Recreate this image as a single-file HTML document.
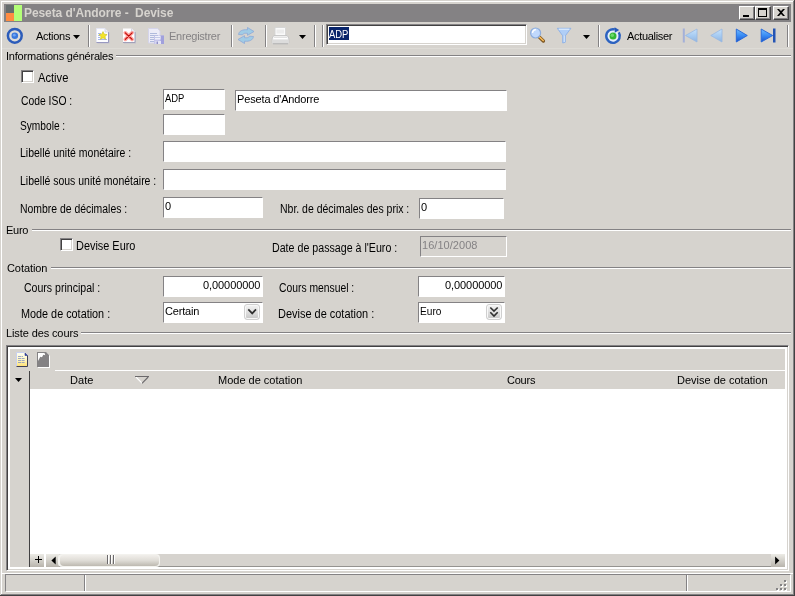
<!DOCTYPE html>
<html><head><meta charset="utf-8"><title>Peseta d'Andorre - Devise</title>
<style>
html,body{margin:0;padding:0}
body{width:795px;height:596px;overflow:hidden;background:#d6d3ce;position:relative;font-family:"Liberation Sans",sans-serif;font-size:11px}
.a{position:absolute}
.t{position:absolute;white-space:pre;line-height:13px;height:13px}
.b{position:absolute;box-sizing:border-box}
.in{position:absolute;box-sizing:border-box;background:#fff;border:1px solid;border-color:#848284 #fff #fff #848284}
.hl{position:absolute;height:1px;background:#848284;box-shadow:0 1px 0 #fff}
.vs{position:absolute;width:1px;background:#848284;box-shadow:1px 0 0 #fff;top:25px;height:22px}
.cb{position:absolute;box-sizing:border-box;width:13px;height:13px;background:#fff;border:1px solid;border-color:#848284 #fff #fff #848284;box-shadow:inset 1px 1px 0 #424142,inset -1px -1px 0 #d6d3ce}
.wb{position:absolute;box-sizing:border-box;width:16px;height:14px;top:6px;background:#d6d3ce;border:1px solid;border-color:#fff #424142 #424142 #fff;box-shadow:inset -1px -1px 0 #848284}
</style></head><body>
<!-- window frame -->
<div class="a" style="left:1px;top:1px;width:792px;height:1px;background:#fff"></div>
<div class="a" style="left:1px;top:1px;width:1px;height:593px;background:#fff"></div>
<div class="a" style="left:793px;top:1px;width:1px;height:594px;background:#848284"></div>
<div class="a" style="left:1px;top:594px;width:793px;height:1px;background:#848284"></div>
<div class="a" style="left:794px;top:0;width:1px;height:596px;background:#424142"></div>
<div class="a" style="left:0;top:595px;width:795px;height:1px;background:#424142"></div>
<!-- title bar -->
<div class="a" style="left:4px;top:4px;width:787px;height:18px;background:#848284"></div>
<div class="a" style="left:6px;top:5px;width:8px;height:8px;background:#666d6d"></div>
<div class="a" style="left:6px;top:13px;width:8px;height:8px;background:#ff8c42"></div>
<div class="a" style="left:14px;top:5px;width:8px;height:16px;background:#b4ff78"></div>
<div class="wb" style="left:739px"><div class="a" style="left:3px;top:8px;width:6px;height:2px;background:#000"></div></div>
<div class="wb" style="left:755px"><div class="b" style="left:2px;top:1px;width:9px;height:9px;border:1px solid #000;border-top-width:2px"></div></div>
<div class="wb" style="left:773px"><svg class="a" style="left:3px;top:2px" width="8" height="7" viewBox="0 0 8 7"><path d="M0 0h2l2 2 2-2h2l-3 3.5L8 7H6L4 5 2 7H0l3-3.5z" fill="#000"/></svg></div>
<!-- toolbar -->
<svg class="a" style="left:6px;top:27px" width="18" height="18" viewBox="0 0 18 18"><circle cx="8.800" cy="8.800" r="6.900" fill="#dddcd9" stroke="#2c5cba" stroke-width="2.500"/><circle cx="8.800" cy="8.800" r="3.300" fill="#3a78dc"/><circle cx="8.300" cy="8.200" r="1.400" fill="#6ea4f4"/></svg>
<svg class="a" style="left:73px;top:35px" width="7" height="4" viewBox="0 0 7 4"><path d="M0 0h7L3.5 4z" fill="#000"/></svg>
<div class="vs" style="left:88px"></div>
<!-- new -->
<svg class="a" style="left:96px;top:28px" width="15" height="16" viewBox="0 0 15 16"><path d="M1.500 1.500h8.500l3.500 3.500v10.500h-12z" fill="#b4b4d0" opacity=".55"/><path d="M0.500 0.500h8.500l3.500 3.500v10h-12z" fill="#fdfdff"/><path d="M12.500 4v10.500h-12" stroke="#9898c0" fill="none"/><path d="M9 0.500v3.500h3.500" fill="#eceff8" stroke="#c8cce4" stroke-width=".7"/><path d="M0.500 14v-13.500h8.500" stroke="#e4e6f4" fill="none"/><path d="M2 5.500h3M2 7.500h2M2 9.500h2M2 11.500h9" stroke="#7890e0" stroke-width=".8" opacity=".8"/><path d="M7 3.600l1.250 2.600 2.850.35-2.100 1.950.55 2.800L7 9.900l-2.550 1.400.55-2.800-2.100-1.950 2.850-.35z" fill="#f4e428" stroke="#c8c020" stroke-width=".6"/></svg>
<!-- delete -->
<svg class="a" style="left:122px;top:28px" width="15" height="16" viewBox="0 0 15 16"><path d="M2 1.500h8.500l3.500 3.500v10.500h-12z" fill="#b4b4c8" opacity=".55"/><path d="M1 0.500h8.500l3.500 3.500v10h-12z" fill="#fdfdff"/><path d="M13 4v10.500h-12" stroke="#a0a0b8" fill="none"/><path d="M9.500 0.500v3.500h3.500" fill="#ececf4" stroke="#c8c8dc" stroke-width=".7"/><path d="M3.300 4.800l6.800 6.600M10.100 4.800l-6.800 6.600" stroke="#ff9088" stroke-width="3.600" stroke-linecap="round" opacity=".85"/><path d="M3.300 4.800l6.800 6.600M10.100 4.800l-6.800 6.600" stroke="#c00808" stroke-width="1.100" stroke-linecap="round"/></svg>
<!-- save (disabled) -->
<svg class="a" style="left:148px;top:28px" width="17" height="17" viewBox="0 0 17 17"><path d="M0.500 0.500h9l2.500 2.500v12h-11.500z" fill="#ececf8" stroke="#d4d4ea"/><path d="M2 5.500h7M2 7.500h8M2 9.500h6M2 11.500h8M2 13.500h8" stroke="#a8b4d8" stroke-width=".9"/><rect x="6" y="7.500" width="10" height="8.500" fill="#c4c4ea"/><rect x="12.500" y="7.500" width="3.500" height="8.500" fill="#a0a0dc"/><rect x="7" y="8" width="5.500" height="3.500" fill="#f0f0fc"/><path d="M7 9.500h5" stroke="#b8c0e0" stroke-width=".8"/><rect x="7.500" y="13" width="5.500" height="3" fill="#e4e4f6"/><rect x="8.500" y="13.500" width="1.500" height="2.500" fill="#9090c8"/></svg>
<div class="vs" style="left:231px"></div>
<!-- refresh arrows (disabled) -->
<svg class="a" style="left:237px;top:27px" width="18" height="17" viewBox="0 0 18 17"><path d="M1.500 7.500C2 4 5.500 2.300 10.500 2.800V.500l6.500 4-6.500 3.800V6.300C8 6 6.300 6.300 5.500 7.800z" fill="#a0cce6" stroke="#8ca8d8" stroke-width=".8"/><path d="M16.500 9.500C16 13 12.500 14.700 7.500 14.200v2.300L1 12.500l6.500-3.800v2C10 11 11.700 10.700 12.500 9.200z" fill="#a0cce6" stroke="#8ca8d8" stroke-width=".8"/></svg>
<div class="vs" style="left:265px"></div>
<!-- printer -->
<svg class="a" style="left:271px;top:27px" width="19" height="18" viewBox="0 0 19 18"><path d="M4 0.500h10.500v8.500h-10.500z" fill="#fafafa" stroke="#d4d4d4" stroke-width=".9"/><path d="M5.500 2.500h7.500v4h-7.500z" fill="#ececec"/><path d="M2.800 8.500h13.400l1.600 2.500v4.800c0 .6-.4 1-1 1h-14.600c-.6 0-1-.4-1-1v-4.800z" fill="#f3f3f3" stroke="#c4c4c4" stroke-width=".9"/><path d="M1.200 12.500h16.600v3.200c0 .6-.4 1-1 1h-14.600c-.6 0-1-.4-1-1z" fill="#dcdcdc"/><path d="M2 16.700h15" stroke="#b4b4b4"/><path d="M2.500 11.500h14" stroke="#fff" stroke-width="1.200"/><path d="M3 10.300h13" stroke="#d8d8d8" stroke-width=".8"/></svg>
<svg class="a" style="left:299px;top:35px" width="7" height="4" viewBox="0 0 7 4"><path d="M0 0h7L3.500 4z" fill="#000"/></svg>
<div class="vs" style="left:314px"></div>
<div class="vs" style="left:322px"></div>
<!-- search box -->
<div class="b" style="left:326px;top:24px;width:201px;height:21px;background:#fff;border:1px solid;border-color:#848284 #fff #fff #848284;box-shadow:inset 1px 1px 0 #424142,inset -1px -1px 0 #d6d3ce"></div>
<div class="a" style="left:329px;top:27px;width:20px;height:13px;background:#08246b"></div>
<!-- magnifier -->
<svg class="a" style="left:528px;top:26px" width="19" height="19" viewBox="0 0 19 19"><path d="M11.500 11.300l3.900 3.700" stroke="#7a5420" stroke-width="3.300" stroke-linecap="round"/><path d="M11.300 10.800l3.900 3.700" stroke="#f4b858" stroke-width="1.700" stroke-linecap="round"/><circle cx="7.600" cy="7" r="5" fill="#c0d8fc" stroke="#8cacdc" stroke-width="1.200"/><path d="M4.600 6.300a3.200 3.200 0 0 1 2.800-2.600" stroke="#fff" stroke-width="1.500" fill="none" stroke-linecap="round"/></svg>
<!-- funnel -->
<svg class="a" style="left:556px;top:27px" width="16" height="17" viewBox="0 0 16 17"><path d="M1.300 1.300h13.600l-5.600 7.500v6.400l-2.600.8v-7.200z" fill="#b0cef6" stroke="#8cb0e6" stroke-width=".9" stroke-linejoin="round"/><path d="M2.800 2.200h10.600" stroke="#e4f0ff" stroke-width="1.100"/><path d="M8.300 8.500v6.500" stroke="#d4e6fc" stroke-width="1"/></svg>
<svg class="a" style="left:583px;top:35px" width="7" height="4" viewBox="0 0 7 4"><path d="M0 0h7L3.500 4z" fill="#000"/></svg>
<div class="vs" style="left:598px"></div>
<!-- actualiser -->
<svg class="a" style="left:604px;top:27px" width="18" height="18" viewBox="0 0 18 18"><circle cx="9" cy="9" r="6" fill="#e4eefc"/><path d="M14.800 5.400A6.800 6.800 0 1 1 10.800 2.450" fill="none" stroke="#2c62c0" stroke-width="2.400"/><path d="M10.600.300l4.600 2.800-4.400 2.600z" fill="#2458b8"/><circle cx="9" cy="9" r="3.500" fill="#34b834"/><circle cx="8.300" cy="8.200" r="1.700" fill="#6cd86c"/></svg>
<!-- nav -->
<svg class="a" style="left:0;top:0" width="0" height="0"><defs><linearGradient id="ge" x1="0" y1="0" x2="0" y2="1"><stop offset="0" stop-color="#70bcff"/><stop offset=".5" stop-color="#3a8cf4"/><stop offset="1" stop-color="#1a54cc"/></linearGradient><linearGradient id="gd" x1="0" y1="0" x2="0" y2="1"><stop offset="0" stop-color="#c8e2fb"/><stop offset=".5" stop-color="#a8ccf2"/><stop offset="1" stop-color="#90b4e0"/></linearGradient></defs></svg>
<svg class="a" style="left:682px;top:28px" width="16" height="15" viewBox="0 0 16 15"><rect x="0.800" y="0.500" width="2" height="14" fill="#a4b0d8"/><path d="M15 1v13L3.500 7.500z" fill="url(#gd)" stroke="#98b8e2" stroke-width=".8"/></svg>
<svg class="a" style="left:710px;top:28px" width="13" height="15" viewBox="0 0 13 15"><path d="M12 1v13L0.800 7.500z" fill="url(#gd)" stroke="#98b8e2" stroke-width=".8"/></svg>
<svg class="a" style="left:735px;top:28px" width="13" height="15" viewBox="0 0 13 15"><path d="M1.300 1v13L12.300 7.500z" fill="url(#ge)" stroke="#2264d8" stroke-width=".9"/></svg>
<svg class="a" style="left:760px;top:28px" width="16" height="15" viewBox="0 0 16 15"><rect x="13" y="0.500" width="2.500" height="14" fill="#2454b4"/><path d="M1.200 1v13L12.700 7.500z" fill="url(#ge)" stroke="#2264d8" stroke-width=".9"/></svg>
<div class="vs" style="left:787px"></div>

<!-- form -->
<div class="hl" style="left:116px;top:55px;width:675px"></div>
<div class="a" style="left:2px;top:48px;width:791px;height:1px;background:#dddbd6"></div>
<div class="cb" style="left:21px;top:70px"></div>
<div class="in" style="left:163px;top:89px;width:62px;height:21px"></div>
<div class="in" style="left:235px;top:90px;width:272px;height:21px"></div>
<div class="in" style="left:163px;top:114px;width:62px;height:21px"></div>
<div class="in" style="left:163px;top:141px;width:343px;height:21px"></div>
<div class="in" style="left:163px;top:169px;width:343px;height:21px"></div>
<div class="in" style="left:163px;top:197px;width:100px;height:21px"></div>
<div class="in" style="left:419px;top:198px;width:85px;height:21px"></div>
<div class="hl" style="left:32px;top:229px;width:759px"></div>
<div class="cb" style="left:60px;top:238px"></div>
<div class="in" style="left:420px;top:236px;width:87px;height:21px;background:#d6d3ce"></div>
<div class="hl" style="left:51px;top:267px;width:740px"></div>
<div class="in" style="left:163px;top:276px;width:100px;height:21px"></div>
<div class="in" style="left:418px;top:276px;width:87px;height:21px"></div>
<div class="in" style="left:163px;top:302px;width:100px;height:21px"></div>
<div class="in" style="left:418px;top:302px;width:87px;height:21px"></div>
<div class="b" style="left:244px;top:304px;width:16px;height:16px;border:1px solid #cfcfcf;border-radius:3px;background:linear-gradient(#f2f2f2,#e2e2e2 45%,#c6c6c6);box-shadow:inset 0 0 0 1px #f8f8f8"></div>
<svg class="a" style="left:247px;top:308px" width="10" height="7" viewBox="0 0 10 7"><path d="M1.300 1.400l3.900 4 3.800-4" stroke="#303030" stroke-width="1.700" fill="none"/></svg>
<div class="b" style="left:486px;top:304px;width:16px;height:16px;border:1px solid #cfcfcf;border-radius:3px;background:linear-gradient(#f2f2f2,#e2e2e2 45%,#c6c6c6);box-shadow:inset 0 0 0 1px #f8f8f8"></div>
<svg class="a" style="left:489px;top:306px" width="10" height="12" viewBox="0 0 10 12"><path d="M1.300 1.500l3.700 3.600 3.700-3.600M1.300 6.300l3.700 3.700 3.700-3.700" stroke="#303030" stroke-width="1.600" fill="none"/></svg>
<div class="hl" style="left:81px;top:332px;width:710px"></div>

<!-- grid -->
<div class="b" style="left:6px;top:345px;width:783px;height:226px;background:#fff;border:1px solid;border-color:#848284 #fff #fff #848284;box-shadow:inset 1px 1px 0 #424142,inset -1px -1px 0 #d6d3ce"></div>
<div class="a" style="left:10px;top:349px;width:775px;height:22px;background:#d6d3ce"></div>
<div class="a" style="left:10px;top:371px;width:19px;height:196px;background:#d6d3ce"></div>
<div class="a" style="left:29px;top:371px;width:1px;height:196px;background:#424142"></div>
<div class="a" style="left:30px;top:371px;width:755px;height:18px;background:#d6d3ce"></div>
<div class="a" style="left:55px;top:370px;width:730px;height:1px;background:#fff"></div>
<!-- grid toolbar icons -->
<svg class="a" style="left:16px;top:352px" width="13" height="16" viewBox="0 0 13 16"><defs><linearGradient id="yg" x1="0" y1="0" x2="0" y2="1"><stop offset="0" stop-color="#fffff4"/><stop offset=".55" stop-color="#fff6c0"/><stop offset="1" stop-color="#ffe070"/></linearGradient></defs><path d="M0.500 0.500h8l3 3v11h-11z" fill="url(#yg)"/><path d="M0.500 0.500v14" stroke="#c8d0f0"/><path d="M0.500 0.500h8" stroke="#c8d0f0"/><path d="M11.500 3.500v11h-11" stroke="#404058" fill="none"/><path d="M9 1l2.500 2.500h-2.500z" fill="#3848a8" stroke="#283890" stroke-width=".6"/><path d="M2 4.500h5M2 6.500h7M2 8.500h7M2 10.500h7" stroke="#8090c4" stroke-width=".9" stroke-dasharray="3 .6" opacity=".85"/></svg>
<svg class="a" style="left:37px;top:352px" width="14" height="16" viewBox="0 0 14 16"><path d="M1 1h9l3 3v12h-12z" fill="#fff"/><path d="M0 0h9l3 3v12h-12z" fill="#848284"/><path d="M1 1h6.500l.8 2.200-2-.4-1.300 2.400-1.700-.5-2.300 4.300z" fill="#fff"/></svg>
<svg class="a" style="left:15px;top:378px" width="7" height="4" viewBox="0 0 7 4"><path d="M0 0h7L3.500 4z" fill="#000"/></svg>
<svg class="a" style="left:135px;top:376px" width="15" height="9" viewBox="0 0 15 9"><path d="M1 1l6.200 6.300" stroke="#fff" stroke-width="1.100"/><path d="M13.200 1l-6.200 6.300" stroke="#6b696b" stroke-width="1.100"/><path d="M0 .500h14" stroke="#6b696b"/></svg>
<!-- scrollbar -->
<div class="a" style="left:30px;top:554px;width:755px;height:13px;background:#d6d3ce"></div>
<div class="a" style="left:30px;top:566px;width:755px;height:1px;background:#959390"></div>
<div class="a" style="left:30px;top:554px;width:14px;height:13px;background:linear-gradient(#ecebe6,#b8b4ac)"></div>
<div class="a" style="left:35px;top:559px;width:7px;height:1px;background:#000"></div>
<div class="a" style="left:38px;top:556px;width:1px;height:7px;background:#000"></div>
<div class="a" style="left:44px;top:554px;width:2px;height:13px;background:#fff"></div>
<div class="a" style="left:46px;top:554px;width:13px;height:13px;background:linear-gradient(#ecebe6,#b8b4ac)"></div>
<svg class="a" style="left:51px;top:556px" width="5" height="9" viewBox="0 0 5 9"><path d="M4.700 .600v7.800L.400 4.500z" fill="#000"/></svg>
<div class="a" style="left:58px;top:554px;width:102px;height:13px;border-radius:4px;background:#f3f2ee"></div>
<div class="a" style="left:60px;top:555px;width:99px;height:11px;border-radius:4px;background:linear-gradient(#f1efeb,#dfdcd6 50%,#bdb9b0)"></div>
<div class="a" style="left:107px;top:555px;width:1px;height:9px;background:#6b696b;box-shadow:3px 0 0 #6b696b,6px 0 0 #6b696b,1px 0 0 #fff,4px 0 0 #fff,7px 0 0 #fff"></div>
<div class="a" style="left:771px;top:554px;width:14px;height:13px;background:linear-gradient(#ecebe6,#b8b4ac)"></div>
<svg class="a" style="left:775px;top:556px" width="5" height="9" viewBox="0 0 5 9"><path d="M.100 .600v7.800L4.400 4.500z" fill="#000"/></svg>

<!-- status bar -->
<div class="a" style="left:2px;top:573px;width:791px;height:1px;background:#fff"></div>
<div class="b" style="left:5px;top:574px;width:786px;height:18px;border:1px solid;border-color:#848284 #fff #fff #848284"></div>
<div class="a" style="left:84px;top:575px;width:1px;height:16px;background:#848284;box-shadow:1px 0 0 #fff"></div>
<div class="a" style="left:686px;top:575px;width:1px;height:16px;background:#848284;box-shadow:1px 0 0 #fff"></div>
<svg class="a" style="left:776px;top:580px" width="12" height="12" viewBox="0 0 12 12"><g fill="#fff"><rect x="9" y="1" width="2" height="2"/><rect x="5" y="5" width="2" height="2"/><rect x="9" y="5" width="2" height="2"/><rect x="1" y="9" width="2" height="2"/><rect x="5" y="9" width="2" height="2"/><rect x="9" y="9" width="2" height="2"/></g><g fill="#848284"><rect x="8" y="0" width="2" height="2"/><rect x="4" y="4" width="2" height="2"/><rect x="8" y="4" width="2" height="2"/><rect x="0" y="8" width="2" height="2"/><rect x="4" y="8" width="2" height="2"/><rect x="8" y="8" width="2" height="2"/></g></svg>

<div class="a" style="left:0;top:0;width:795px;height:596px;will-change:transform">
<span class="t" style="left:24px;top:7px;font-size:12px;color:#d6d3ce;letter-spacing:-0.09px;font-weight:bold;">Peseta d'Andorre -  Devise</span>
<span class="t" style="left:36px;top:30px;letter-spacing:-0.28px;">Actions</span>
<span class="t" style="left:169px;top:30px;color:#848284;letter-spacing:-0.24px;">Enregistrer</span>
<span class="t" style="left:329px;top:28px;color:#fff;transform-origin:0 0;transform:scaleX(0.857);">ADP</span>
<span class="t" style="left:627px;top:30px;letter-spacing:-0.32px;">Actualiser</span>
<span class="t" style="left:6px;top:50px;letter-spacing:-0.21px;">Informations générales</span>
<span class="t" style="left:38px;top:72px;font-size:12px;transform-origin:0 0;transform:scaleX(0.930);">Active</span>
<span class="t" style="left:21px;top:95px;font-size:12px;transform-origin:0 0;transform:scaleX(0.862);">Code ISO :</span>
<span class="t" style="left:165px;top:92px;transform-origin:0 0;transform:scaleX(0.857);">ADP</span>
<span class="t" style="left:237px;top:93px;letter-spacing:-0.15px;">Peseta d'Andorre</span>
<span class="t" style="left:20px;top:120px;font-size:12px;transform-origin:0 0;transform:scaleX(0.847);">Symbole :</span>
<span class="t" style="left:20px;top:147px;font-size:12px;transform-origin:0 0;transform:scaleX(0.873);">Libellé unité monétaire :</span>
<span class="t" style="left:20px;top:175px;font-size:12px;transform-origin:0 0;transform:scaleX(0.873);">Libellé sous unité monétaire :</span>
<span class="t" style="left:20px;top:203px;font-size:12px;transform-origin:0 0;transform:scaleX(0.869);">Nombre de décimales :</span>
<span class="t" style="left:165px;top:200px;">0</span>
<span class="t" style="left:280px;top:203px;font-size:12px;transform-origin:0 0;transform:scaleX(0.873);">Nbr. de décimales des prix :</span>
<span class="t" style="left:421px;top:201px;">0</span>
<span class="t" style="left:6px;top:224px;letter-spacing:-0.28px;">Euro</span>
<span class="t" style="left:76px;top:240px;font-size:12px;transform-origin:0 0;transform:scaleX(0.909);">Devise Euro</span>
<span class="t" style="left:272px;top:242px;font-size:12px;transform-origin:0 0;transform:scaleX(0.888);">Date de passage à l'Euro :</span>
<span class="t" style="left:422px;top:239px;color:#848284;letter-spacing:0.04px;">16/10/2008</span>
<span class="t" style="left:7px;top:262px;letter-spacing:-0.08px;">Cotation</span>
<span class="t" style="left:24px;top:282px;font-size:12px;transform-origin:0 0;transform:scaleX(0.879);">Cours principal :</span>
<span class="t" style="left:203px;top:279px;letter-spacing:-0.08px;">0,00000000</span>
<span class="t" style="left:279px;top:282px;font-size:12px;transform-origin:0 0;transform:scaleX(0.861);">Cours mensuel :</span>
<span class="t" style="left:445px;top:279px;letter-spacing:-0.08px;">0,00000000</span>
<span class="t" style="left:21px;top:308px;font-size:12px;transform-origin:0 0;transform:scaleX(0.903);">Mode de cotation :</span>
<span class="t" style="left:165px;top:305px;letter-spacing:-0.18px;">Certain</span>
<span class="t" style="left:278px;top:308px;font-size:12px;transform-origin:0 0;transform:scaleX(0.913);">Devise de cotation :</span>
<span class="t" style="left:420px;top:305px;transform-origin:0 0;transform:scaleX(0.920);">Euro</span>
<span class="t" style="left:6px;top:327px;letter-spacing:-0.11px;">Liste des cours</span>
<span class="t" style="left:70px;top:374px;letter-spacing:0.05px;">Date</span>
<span class="t" style="left:218px;top:374px;">Mode de cotation</span>
<span class="t" style="left:507px;top:374px;letter-spacing:-0.24px;">Cours</span>
<span class="t" style="left:677px;top:374px;">Devise de cotation</span>
</div>
</body></html>
